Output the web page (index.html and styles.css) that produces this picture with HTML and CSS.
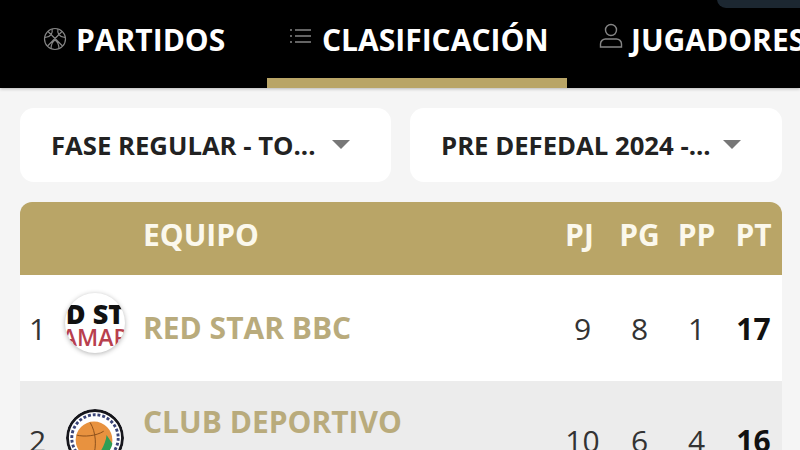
FILE: index.html
```html
<!DOCTYPE html>
<html lang="es">
<head>
    <meta charset="UTF-8">
    <meta name="viewport" content="width=device-width, initial-scale=1.0">
    <title>Clasificación</title>
    <link rel="stylesheet" href="styles.css">
</head>
<body>
    <div class="status-pill"></div>
    <nav class="tabs">
        <div class="tab tab-partidos">
            <svg class="tab-icon" width="24" height="24" viewBox="0 0 24 24" fill="none" stroke="#858585" stroke-width="1.2">
                <circle cx="12" cy="12" r="10.500"/>
                <path d="M5 4.500 19.500 19M19 4.500 4.500 19M9 2c1 4-1 8-7 8.500M15 2c-1 4 1 8 7 8.500M8 22c0-4 1-7 4-9M16 22c0-4-1-7-4-9"/>
            </svg>
            <span>PARTIDOS</span>
        </div>
        <div class="tab tab-clasif active">
            <svg class="tab-icon" width="24" height="18" viewBox="0 0 24 18" fill="none" stroke="#858585" stroke-width="1.4">
                <path d="M6 3h16M6 9h16M6 15h16M1 3h2M1 9h2M1 15h2"/>
            </svg>
            <span>CLASIFICACIÓN</span>
        </div>
        <div class="tab tab-jugadores">
            <svg class="tab-icon" width="24" height="26" viewBox="0 0 24 26" fill="none" stroke="#858585" stroke-width="1.4">
                <circle cx="12" cy="7" r="5.500"/>
                <path d="M1.500 24v-3c0-3 2.500-5 5-5h11c2.500 0 5 2 5 5v3z"/>
            </svg>
            <span>JUGADORES</span>
        </div>
    </nav>

    <main class="content">
        <div class="filters">
            <div class="select select-fase"><span>FASE REGULAR - TO...</span><i class="caret"></i></div>
            <div class="select"><span>PRE DEFEDAL 2024 -...</span><i class="caret"></i></div>
        </div>

        <div class="table">
            <div class="row head">
                <div class="pos"></div>
                <div class="logo-cell"></div>
                <div class="name">EQUIPO</div>
                <div class="num num-pj">PJ</div>
                <div class="num">PG</div>
                <div class="num">PP</div>
                <div class="num">PT</div>
            </div>
            <div class="row team">
                <div class="pos">1</div>
                <div class="logo-cell">
                    <div class="logo logo-star">
                        <span class="star-top">D ST</span>
                        <span class="star-bottom">AMAR</span>
                    </div>
                </div>
                <div class="name">RED STAR BBC</div>
                <div class="num">9</div>
                <div class="num">8</div>
                <div class="num">1</div>
                <div class="num total">17</div>
            </div>
            <div class="row team alt">
                <div class="pos">2</div>
                <div class="logo-cell">
                    <svg class="logo logo-club" width="58" height="58" viewBox="0 0 60 60">
                        <circle cx="30" cy="30" r="28.500" fill="#fff" stroke="#16161c" stroke-width="3"/>
                        <circle cx="30" cy="30" r="24" fill="#fff" stroke="#3a4478" stroke-width="3" stroke-dasharray="3 2"/>
                        <circle cx="29" cy="32" r="19" fill="#e8923f"/>
                        <path d="M31 51c8-1 15-6 17-15l-6-9c-1 9-6 17-11 24z" fill="#2f9e55"/>
                        <path d="M11 27c8 2 20 1 28-4M25 14c6 10 7 24 3 36" fill="none" stroke="#8a4f1c" stroke-width="1"/>
                    </svg>
                </div>
                <div class="name">CLUB DEPORTIVO</div>
                <div class="num">10</div>
                <div class="num">6</div>
                <div class="num">4</div>
                <div class="num total">16</div>
            </div>
        </div>
    </main>
</body>
</html>
```

FILE: styles.css
```css
* {
    box-sizing: border-box;
}
html, body {
    margin: 0;
    height: 450px;
    overflow: hidden;
}
body {
    font-family: "Open Sans", "Noto Sans", sans-serif;
    background: #f5f5f5;
    position: relative;
}
.status-pill {
    position: absolute;
    top: -10px;
    left: 717px;
    width: 100px;
    height: 18px;
    border-radius: 10px;
    background: #1c2731;
}
.tabs {
    display: flex;
    height: 88px;
    background: #000;
    color: #fff;
    box-shadow: 0 1px 3px rgba(0, 0, 0, 0.25);
    white-space: nowrap;
}
.tab {
    display: flex;
    align-items: center;
    gap: 9px;
    height: 88px;
    padding-bottom: 10px;
    font-size: 30px;
    font-weight: 700;
    flex: none;
}
.tab-partidos {
    width: 267px;
    padding-left: 43px;
}
.tab-clasif {
    width: 300px;
    padding-left: 22px;
}
.tab-jugadores {
    padding-left: 32px;
    gap: 8px;
}
.tab.active {
    border-bottom: 10px solid #b9a567;
    padding-bottom: 0;
}
.tab-icon {
    flex: none;
}
.tab-clasif .tab-icon {
    margin-bottom: 6px;
}
.tab-jugadores .tab-icon {
    margin-bottom: 6px;
}
.content {
    padding: 20px 18px 0 20px;
}
.filters {
    display: flex;
    gap: 19px;
}
.select {
    flex: 1;
    height: 74px;
    background: #fff;
    border-radius: 14px;
    display: flex;
    align-items: center;
    justify-content: space-between;
    padding: 0 41px 0 31px;
    font-size: 25.7px;
    font-weight: 700;
    color: #222;
    white-space: nowrap;
}
.select-fase {
    flex: none;
    width: 371px;
}
.caret {
    border-left: 9px solid transparent;
    border-right: 9px solid transparent;
    border-top: 9px solid #777;
    margin-bottom: 1px;
}
.table {
    margin-top: 20px;
    border-radius: 12px 12px 0 0;
    overflow: hidden;
}
.row {
    display: flex;
    align-items: center;
}
.head {
    height: 73px;
    padding-bottom: 8px;
    background: #b9a567;
    color: #fbf8ec;
    font-size: 30px;
    font-weight: 700;
}
.team {
    height: 106px;
    background: #fff;
    color: #333;
    font-size: 30px;
}
.team.alt {
    height: 118px;
    background: #ececec;
}
.pos {
    width: 44px;
    padding-left: 9px;
    flex: none;
}
.logo-cell {
    width: 79px;
    flex: none;
    padding-left: 1px;
}
.logo {
    display: block;
    border-radius: 50%;
}
.logo-club {
    margin: 0 0 4px 1px;
}
.logo-star {
    width: 60px;
    height: 60px;
    margin-bottom: 10px;
    padding-top: 4px;
    background: #fff;
    box-shadow: 0 1px 5px rgba(0, 0, 0, 0.3);
    overflow: hidden;
    display: flex;
    flex-direction: column;
    align-items: center;
    justify-content: center;
    white-space: nowrap;
}
.star-top {
    font-size: 27px;
    line-height: 24px;
    font-weight: 800;
    color: #111;
}
.star-bottom {
    font-size: 23px;
    line-height: 22px;
    font-weight: 600;
    color: #b8404e;
}
.name {
    flex: 1;
    color: #b9ab7c;
    font-weight: 700;
    font-size: 30px;
    line-height: 38px;
}
.head .name {
    color: #fbf8ec;
}
.alt .name {
    align-self: flex-start;
    padding-top: 22px;
}
.num {
    width: 57px;
    flex: none;
    text-align: center;
}
.num-pj {
    padding-right: 6px;
}
.total {
    font-weight: 700;
    color: #111;
}
```
